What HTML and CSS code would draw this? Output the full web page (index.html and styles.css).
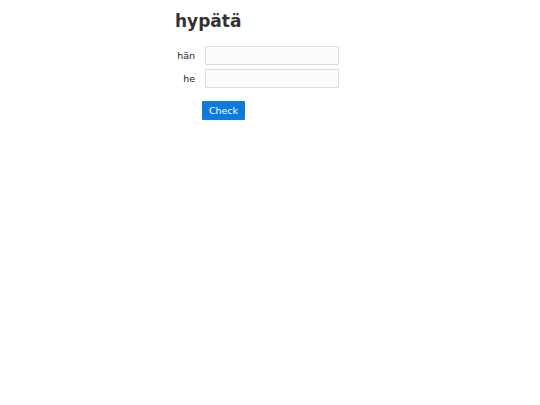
FILE: index.html
```html
<!DOCTYPE html>
<html>
<head>
<meta charset="utf-8">
<link rel="stylesheet" href="styles.css">
</head>
<body>
<main class="page">
  <h1 class="title">hypätä</h1>
  <form class="form">
    <div class="row">
      <label class="label">hän</label>
      <input class="field" type="text">
    </div>
    <div class="row">
      <label class="label">he</label>
      <input class="field" type="text">
    </div>
    <div class="actions">
      <button class="btn" type="button">Check</button>
    </div>
  </form>
</main>
</body>
</html>
```
FILE: styles.css
```css
html, body {
  margin: 0;
  padding: 0;
  background: #fff;
}
body {
  font-family: "DejaVu Sans", sans-serif;
  color: #333;
}
.page {
  width: 188px;
  margin: 0 auto;
  padding-top: 10px;
}
.title {
  margin: 0 0 0 -1px;
  font-size: 17px;
  font-weight: bold;
  line-height: 22px;
  color: #333;
}
.form {
  margin-top: 14px;
}
.row {
  display: flex;
  align-items: center;
  margin-bottom: 4px;
}
.label {
  width: 19px;
  margin-right: 10px;
  text-align: right;
  font-size: 9.5px;
  color: #222;
  white-space: nowrap;
}
.field {
  box-sizing: border-box;
  width: 134px;
  height: 19px;
  margin: 0;
  padding: 0 4px;
  border: 1px solid #ddd;
  border-radius: 1px;
  background: #fcfcfc;
}
.actions {
  padding-left: 26px;
  margin-top: 11px;
}
.btn {
  box-sizing: border-box;
  width: 43px;
  height: 19px;
  border: none;
  border-radius: 1px;
  background: #0b7be0;
  color: #fff;
  font-family: "DejaVu Sans", sans-serif;
  font-size: 9.5px;
  padding: 0;
}
```
